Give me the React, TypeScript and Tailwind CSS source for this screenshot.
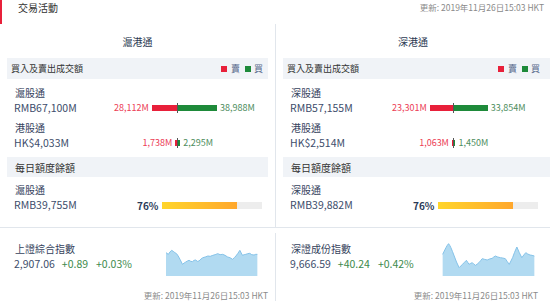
import React from "react";

const FONT = '"Noto Sans CJK TC", "Noto Sans", sans-serif';

const leftChart =
  "498,155 505,160 510,153 515,148 520,151 525,155 530,158 535,165 541,176 548,190 553,186 558,183 563,180 568,178 573,181 578,182 583,178 588,177 593,181 598,180 604,174 610,170 617,168 625,165 632,166 640,163 647,161 655,158 662,161 670,160 677,163 685,168 692,170 700,175 705,170 710,165 716,157 722,148 726,156 730,163 735,161 740,160 746,158 752,157 758,161 765,162 770,160 775,160";
const rightChart =
  "500,160 505,150 510,140 514,133 518,128 522,134 525,140 530,152 535,165 542,183 550,200 555,195 560,190 566,184 572,178 576,184 580,190 585,187 590,185 595,190 600,193 605,189 610,185 615,179 620,173 627,175 635,177 642,174 650,172 655,168 660,165 667,168 675,170 682,171 690,173 696,182 702,190 707,180 712,170 718,154 725,138 732,154 740,170 746,162 752,155 758,159 765,162 771,163 778,165";

function Chart({ points }: { points: string }) {
  const first = points.split(" ")[0].split(",")[0];
  const last = points.split(" ").slice(-1)[0].split(",")[0];
  return (
    <svg width={93} height={34} viewBox="498 123 282 102" preserveAspectRatio="none" className="block">
      <polygon points={`${points} ${last},225 ${first},225`} fill="#b1daf1" />
      <polyline points={points} fill="none" stroke="#84c2e8" strokeWidth={3} />
    </svg>
  );
}

function BarRow({ value, sell, buy }: { value: string; sell: number; buy: number }) {
  const fmt = (n: number) => n.toLocaleString("en-US") + "M";
  return (
    <div className="flex items-center h-[16px] pl-[7px]">
      <span className="w-[100px] text-[10.5px] leading-[16px] text-[#3d4d6b]">{value}</span>
      <div className="w-[63px] flex justify-end items-center gap-[3px]">
        <span className="text-[9px] text-[#ec3d55] leading-[12px]">{fmt(sell)}</span>
        <div className="h-[6px] bg-[#e8203a]" style={{ width: sell / 1000 }} />
      </div>
      <div className="w-[1px] h-[10px] bg-[#555]" />
      <div className="flex items-center gap-[3px]">
        <div className="h-[6px] bg-[#1e8a3a]" style={{ width: buy / 1000 }} />
        <span className="text-[9px] text-[#4d8d5d] leading-[12px]">{fmt(buy)}</span>
      </div>
    </div>
  );
}

function Label({ children, pt }: { children: React.ReactNode; pt: string }) {
  return <div className={`${pt} pl-[8px] text-[10px] leading-[15px] text-[#34425c]`}>{children}</div>;
}

function Column({
  title,
  label1,
  v1,
  s1,
  b1,
  v2,
  s2,
  b2,
  quota,
  right,
}: {
  title: string;
  label1: string;
  v1: string;
  s1: number;
  b1: number;
  v2: string;
  s2: number;
  b2: number;
  quota: string;
  right?: boolean;
}) {
  return (
    <div className={right ? "pl-[7px] border-l border-[#e1e6ec]" : "px-[7px]"}>
      <div className={`h-[34px] pt-[11px] text-center text-[10px] leading-[14px] text-[#2c3a52] ${right ? "pr-[7px]" : ""}`}>
        {title}
      </div>
      <div className={`h-[21px] bg-[#f0f3f7] flex items-center justify-between pl-[4px] ${right ? "pr-[10px]" : "pr-[5px]"}`}>
        <span className="text-[9px] text-[#333]">買入及賣出成交額</span>
        <div className="flex items-center text-[9px] text-[#56678a] leading-[10px]">
          <div className="w-[6px] h-[6px] bg-[#e8203a] mr-[4px]" />
          <span>賣</span>
          <div className="w-[6px] h-[6px] bg-[#1e8a3a] ml-[5px] mr-[3px]" />
          <span>買</span>
        </div>
      </div>
      <Label pt="pt-[6px]">{label1}</Label>
      <BarRow value={v1} sell={s1} buy={b1} />
      <Label pt="pt-[4px]">港股通</Label>
      <BarRow value={v2} sell={s2} buy={b2} />
      <div className="mt-[6px] h-[20px] bg-[#f0f3f7] flex items-center pl-[8px] text-[10px] text-[#333]">每日額度餘額</div>
      <Label pt="pt-[5px]">{label1}</Label>
      <div className="flex items-center h-[16px] pl-[7px]">
        <span className="w-[123px] text-[10.5px] leading-[16px] text-[#3d4d6b]">{quota}</span>
        <span className="w-[25px] text-[10px] font-bold text-[#2b3a58]">76%</span>
        <div className="w-[100px] h-[7px] bg-[#ededed]">
          <div className="h-full bg-gradient-to-r from-[#ffd52b] to-[#ffa72c]" style={{ width: "75%" }} />
        </div>
      </div>
    </div>
  );
}

function IndexCol({
  name,
  value,
  ch,
  pct,
  points,
  right,
}: {
  name: string;
  value: string;
  ch: string;
  pct: string;
  points: string;
  right?: boolean;
}) {
  return (
    <div className={`mt-[5px] ${right ? "pl-[7px] border-l border-[#e1e6ec] pr-[12px]" : "px-[7px]"}`}>
      <div className="flex">
        <div className="w-[159px] pt-[8px] pl-[7px]">
          <div className="pl-[1px] text-[10px] leading-[15px] text-[#34425c]">{name}</div>
          <div className="flex text-[10.5px] leading-[15px]">
            <span className="text-[#3d4d6b] mr-[7px]">{value}</span>
            <span className="text-[#3d8a4c] mr-[8px]">{ch}</span>
            <span className="text-[#3d8a4c]">{pct}</span>
          </div>
        </div>
        <div className="mt-[9px]">
          <Chart points={points} />
        </div>
      </div>
      <div className="mt-[13px] text-right text-[8.5px] leading-[12px] text-[#8a8a8a]">更新: 2019年11月26日15:03 HKT</div>
    </div>
  );
}

export default function App() {
  return (
    <div className="w-[550px] h-[302px] bg-white overflow-hidden" style={{ fontFamily: FONT }}>
      <div className="flex h-[24px] items-start">
        <div className="w-[2px] h-[24px] bg-[#e8203a]" />
        <div className="ml-[16px] text-[10px] leading-[16px] text-[#333]">交易活動</div>
        <div className="ml-auto pr-[6px] text-[8.5px] leading-[14px] text-[#8a8a8a]">更新: 2019年11月26日15:03 HKT</div>
      </div>
      <div className="grid grid-cols-[275px_275px] h-[203px]">
        <Column title="滬港通" label1="滬股通" v1="RMB67,100M" s1={28112} b1={38988} v2="HK$4,033M" s2={1738} b2={2295} quota="RMB39,755M" />
        <Column title="深港通" label1="深股通" v1="RMB57,155M" s1={23301} b1={33854} v2="HK$2,514M" s2={1063} b2={1450} quota="RMB39,882M" right />
      </div>
      <div className="border-t border-[#e1e6ec] grid grid-cols-[275px_275px]">
        <IndexCol name="上證綜合指數" value="2,907.06" ch="+0.89" pct="+0.03%" points={leftChart} />
        <IndexCol name="深證成份指數" value="9,666.59" ch="+40.24" pct="+0.42%" points={rightChart} right />
      </div>
    </div>
  );
}
